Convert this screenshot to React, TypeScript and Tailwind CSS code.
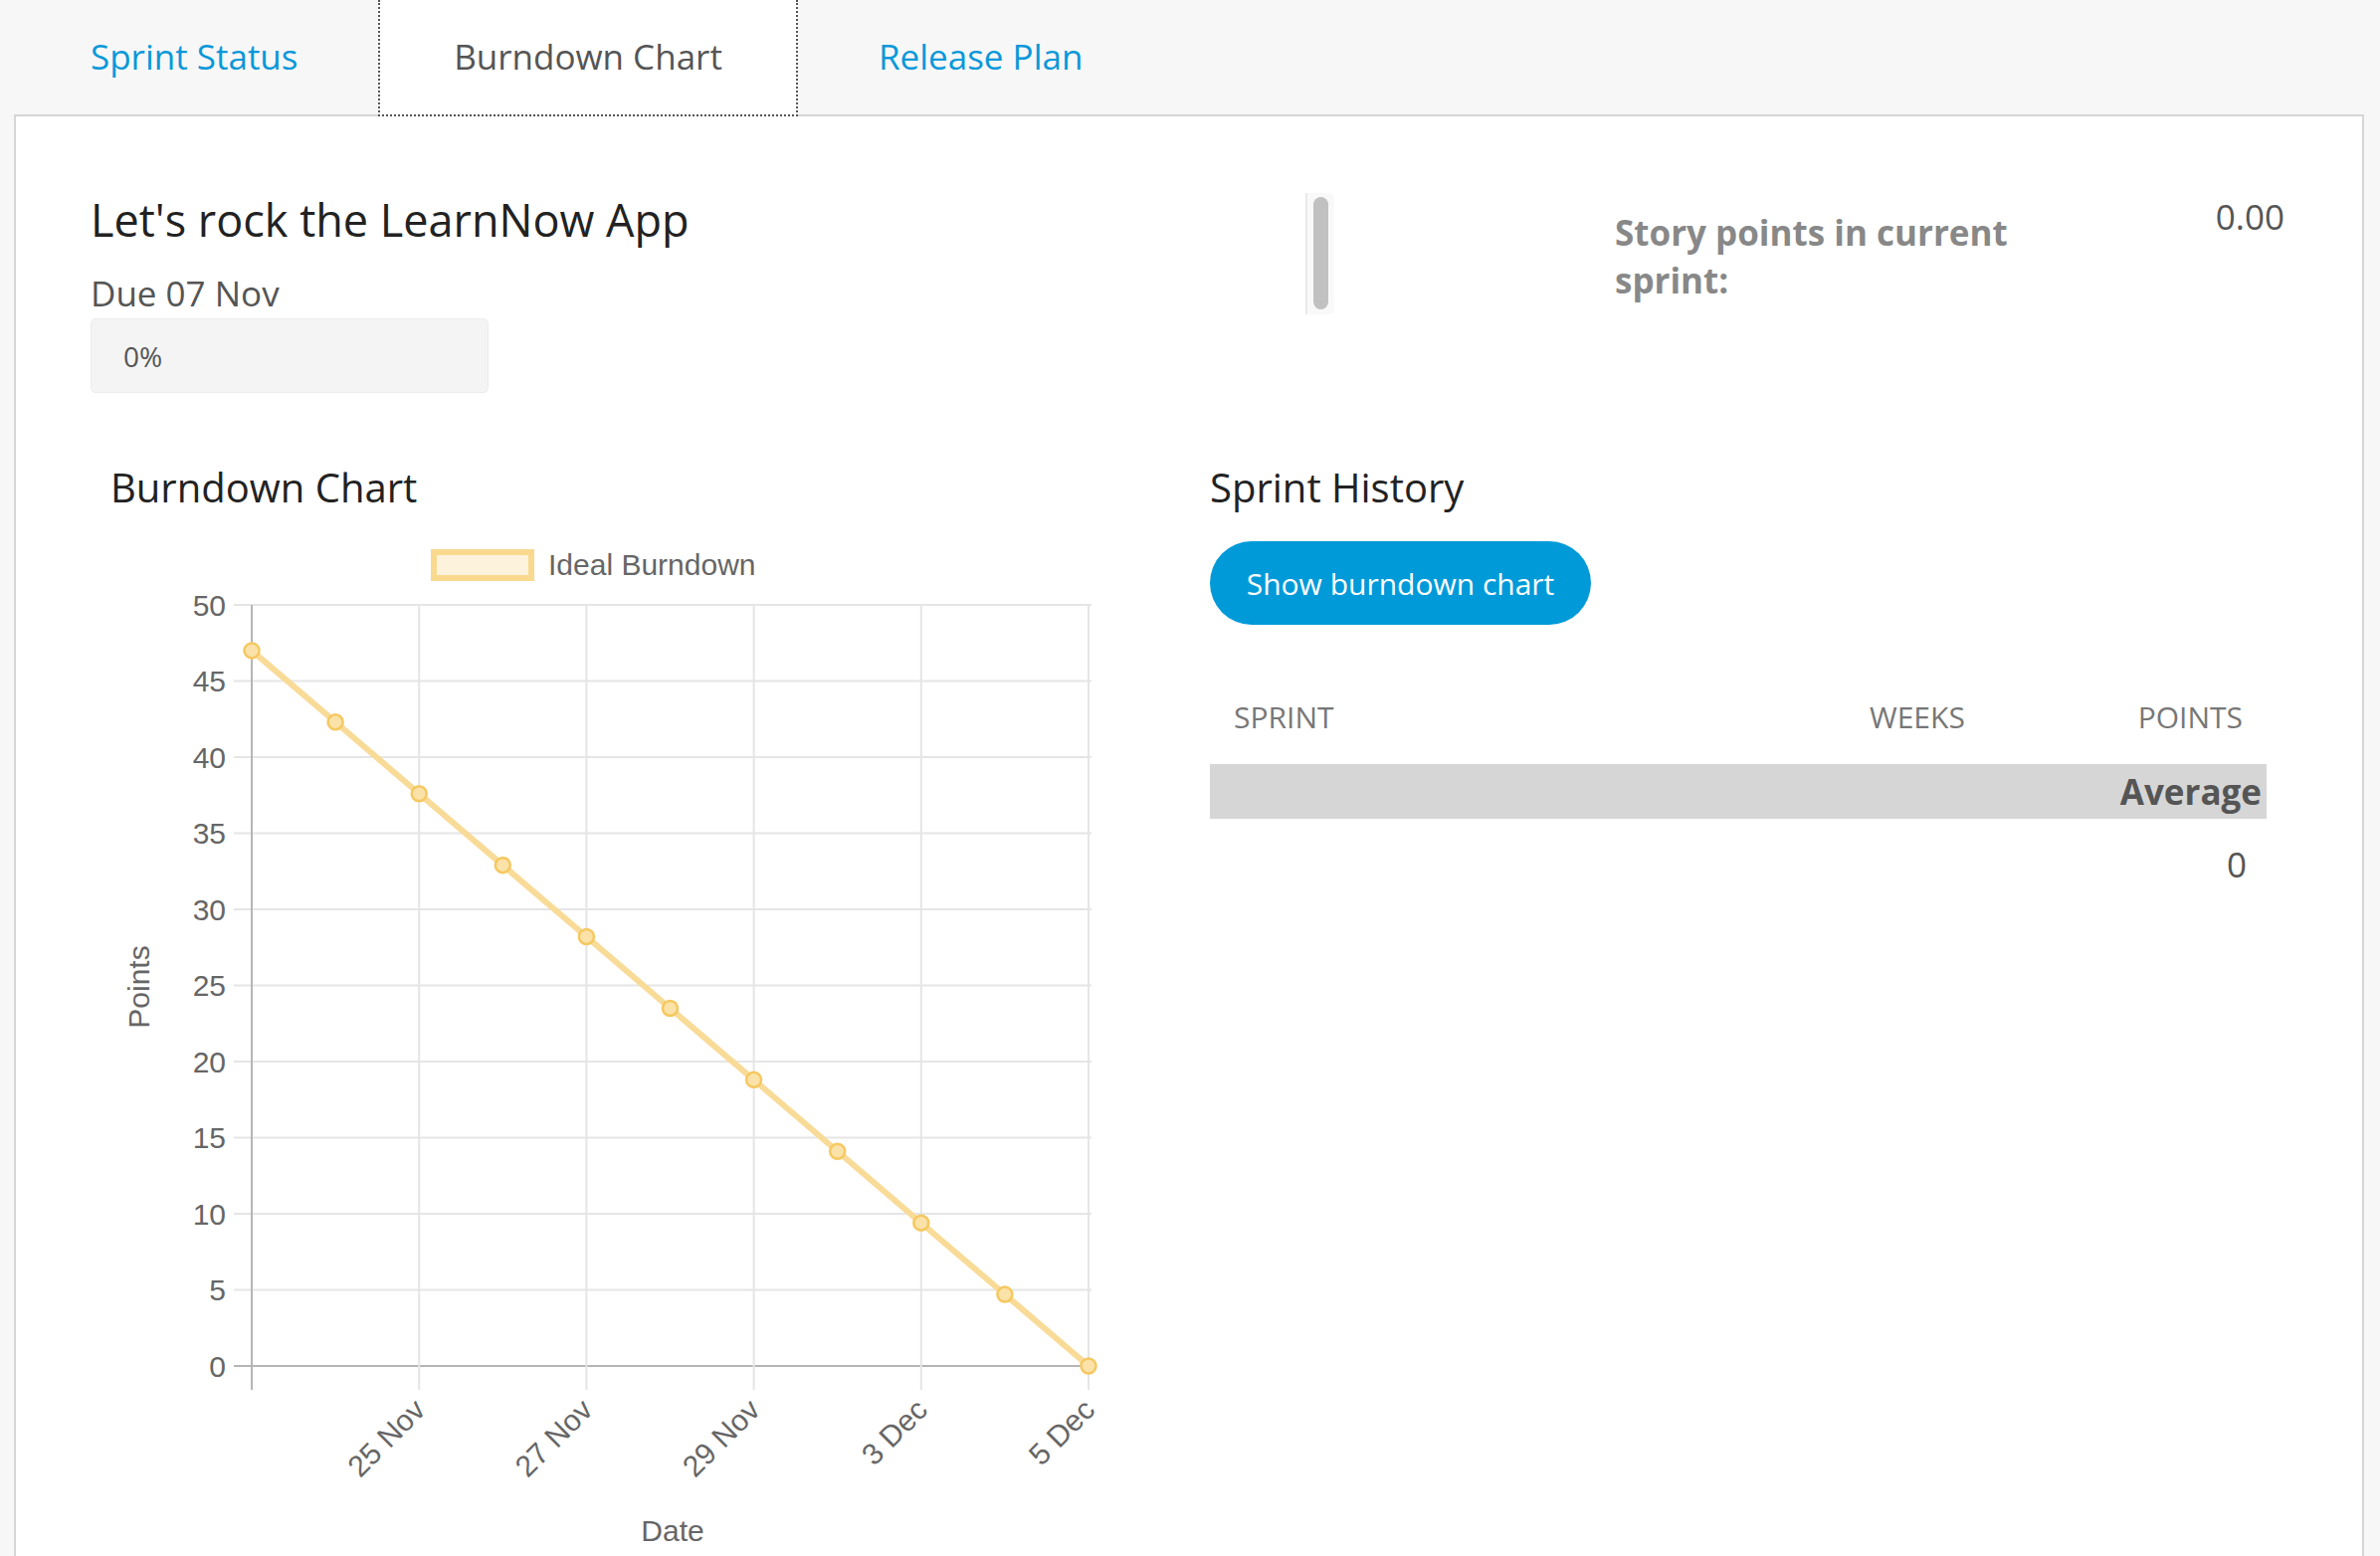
import React from "react";

const values: number[] = Array.from({ length: 11 }, (_, i) => 47 - i * 4.7);
const yTicks: number[] = [50, 45, 40, 35, 30, 25, 20, 15, 10, 5, 0];
const xLabels: string[] = ["25 Nov", "27 Nov", "29 Nov", "3 Dec", "5 Dec"];

// chart coordinates are relative to the svg origin
const yAt = (v: number): number => 843 - v * 15.3;
const xAt = (i: number): number => 142 + i * 84.1;

const BurndownSvg: React.FC = () => {
	const pts = values.map((v, i) => `${xAt(i)},${yAt(v)}`).join(" ");
	return (
		<svg width="1000" height="1040" className="block" style={{ fontFamily: "'Liberation Sans', Arial, sans-serif" }}>
			{/* legend */}
			<rect x="325" y="25" width="98" height="26" fill="#fdf3dc" stroke="#f8d98e" strokeWidth="6" />
			<text x="440" y="48" fontSize="30" fill="#666">
				Ideal Burndown
			</text>

			{/* horizontal grid */}
			{yTicks.map((t) => (
				<g key={t}>
					<line x1="124" x2="986" y1={yAt(t)} y2={yAt(t)} stroke={t === 0 ? "#b5b5b5" : "#e5e5e5"} strokeWidth="2" />
					<text x="116" y={yAt(t) + 10.5} fontSize="30" fill="#666" textAnchor="end">
						{t}
					</text>
				</g>
			))}

			{/* vertical grid */}
			{[0, 1, 2, 3, 4, 5].map((i) => (
				<line
					key={i}
					x1={xAt(i * 2)}
					x2={xAt(i * 2)}
					y1={yAt(50)}
					y2="867"
					stroke={i === 0 ? "#b5b5b5" : "#e5e5e5"}
					strokeWidth="2"
				/>
			))}

			{/* x labels */}
			{xLabels.map((l, i) => {
				const x = xAt((i + 1) * 2) + 8;
				return (
					<text key={l} x={x} y="889" fontSize="30" fill="#666" textAnchor="end" transform={`rotate(-45 ${x} 889)`}>
						{l}
					</text>
				);
			})}

			<polyline points={pts} fill="none" stroke="#f9db98" strokeWidth="6" strokeLinejoin="round" />
			{values.map((v, i) => (
				<circle key={i} cx={xAt(i)} cy={yAt(v)} r="7.5" fill="#fae2a8" stroke="#f5c860" strokeWidth="2.5" />
			))}

			<text x="565" y="1019" fontSize="30" fill="#666" textAnchor="middle">
				Date
			</text>
			<text x="38.5" y="462" fontSize="30" fill="#666" textAnchor="middle" transform="rotate(-90 38.5 462)">
				Points
			</text>
		</svg>
	);
};

const App: React.FC = () => {
	return (
		<div className="h-screen w-full overflow-hidden bg-[#f7f7f7] pl-[14px] pr-[16px] font-['Open_Sans',sans-serif]">
			{/* tabs */}
			<div className="flex h-[117px]">
				<div className="flex w-[366px] items-center border-b-2 border-[#d6d6d6] pb-[1px] pl-[77px] text-[35px] text-[#0a98d9]">
					Sprint Status
				</div>
				<div className="flex w-[422px] items-center justify-center border-2 border-t-0 border-dotted border-[#555] bg-white text-[35px] text-[#555]">
					Burndown Chart
				</div>
				<div className="flex flex-1 items-center border-b-2 border-[#d6d6d6] pb-[1px] pl-[81px] text-[35px] text-[#0a98d9]">
					Release Plan
				</div>
			</div>

			{/* panel */}
			<div className="h-[1500px] border-x-2 border-[#d6d6d6] bg-white pl-[75px] pr-[78px] pt-[77px]">
				<div className="flex">
					<div className="w-[1221px]">
						<h1 className="text-[45px] leading-[54px] text-[#222]">Let's rock the LearnNow App</h1>
						<div className="mt-[23px] text-[35px] leading-[48px] text-[#555]">Due 07 Nov</div>
						<div className="mt-[1px] flex h-[75px] w-[400px] items-center rounded-[5px] border border-[#ececec] bg-[#f4f4f4] pl-[32px] text-[28px] text-[#555]">
							0%
						</div>
					</div>
					<div className="flex h-[122px] w-[29px] justify-center rounded-r-[6px] border-l-2 border-[#e9e9e9] bg-[#f9f9f9] pt-[4px]">
						<div className="h-[113px] w-[15px] rounded-full bg-[#c1c1c1]" />
					</div>
					<div className="ml-[282px] mt-[16px] w-[430px] text-[35px] font-bold leading-[48px] text-[#888]">
						Story points in current sprint:
					</div>
					<div className="flex-1 text-right text-[35px] leading-[48px] text-[#555]">0.00</div>
				</div>

				<div className="mt-[71px] flex">
					<div className="w-[1125px] pl-[20px]">
						<h2 className="text-[40px] leading-[48px] text-[#222]">Burndown Chart</h2>
						<div className="mt-[16px]">
							<BurndownSvg />
						</div>
					</div>
					<div className="w-[1062px]">
						<h2 className="text-[40px] leading-[48px] text-[#222]">Sprint History</h2>
						<button className="mt-[30px] h-[84px] w-[383px] rounded-full bg-[#009ad9] text-[30px] text-white">
							Show burndown chart
						</button>
						<div className="mt-[69px] flex text-[30px] leading-[48px] text-[#777]">
							<div className="w-[639px] px-[24px]">SPRINT</div>
							<div className="w-[266px] px-[24px]">WEEKS</div>
							<div className="w-[157px] px-[24px] text-right">POINTS</div>
						</div>
						<div className="mt-[23px] h-[55px] bg-[#d6d6d6] pr-[5px] text-right text-[35px] font-bold leading-[55px] text-[#555]">
							Average
						</div>
						<div className="mt-[22px] pr-[20px] text-right text-[35px] leading-[48px] text-[#555]">0</div>
					</div>
				</div>
			</div>
		</div>
	);
};

export default App;
